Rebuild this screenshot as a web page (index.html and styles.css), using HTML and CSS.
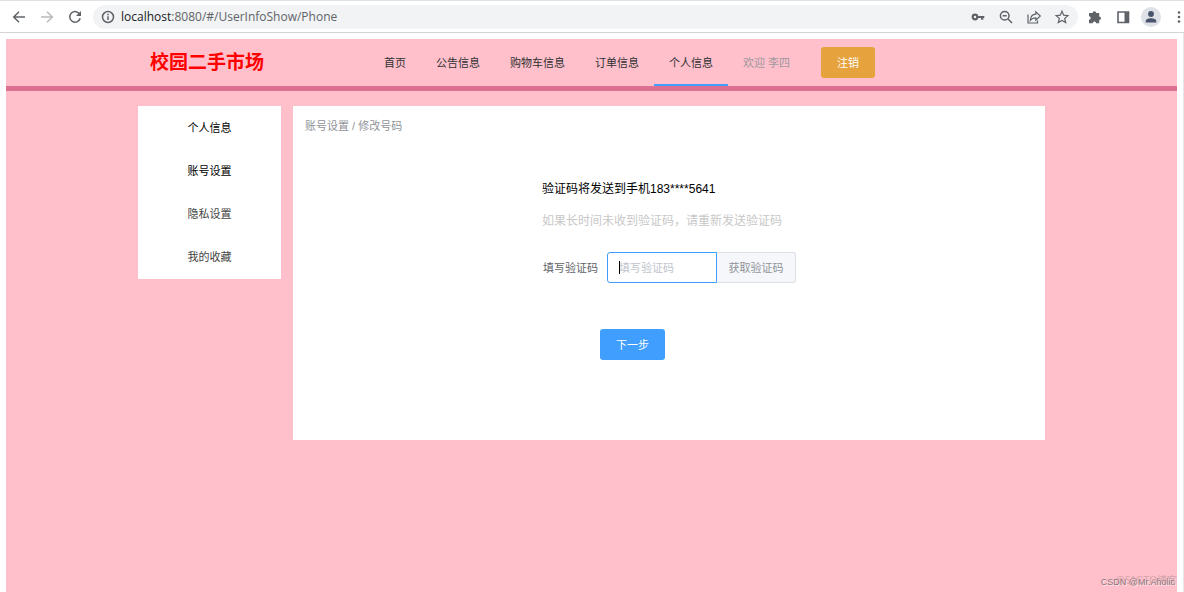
FILE: index.html
```
<!DOCTYPE html>
<html lang="zh-CN">
<head>
<meta charset="utf-8">
<title>校园二手市场</title>
<meta name="viewport" content="width=device-width, initial-scale=1">
<link rel="stylesheet" href="styles.css">
</head>
<body>
<div class="browser">
  <button class="tool" aria-label="后退"><svg viewBox="0 0 16 16" class="icon"><path d="M14 8H3M8 2.700 2.700 8 8 13.300"/></svg></button>
  <button class="tool tool-off" aria-label="前进"><svg viewBox="0 0 16 16" class="icon"><path d="M2 8h11M8 2.700 13.300 8 8 13.300"/></svg></button>
  <button class="tool" aria-label="刷新"><svg viewBox="0 0 16 16" class="icon"><path d="M12.800 5.500A5.300 5.300 0 1 0 13.200 9.300"/><path class="solid" d="M14 2v5H9z"/></svg></button>
  <div class="address">
    <svg viewBox="0 0 16 16" class="icon info"><circle cx="8" cy="8" r="5.500"/><path d="M8 7.300v3.800M8 4.800v1.400"/></svg>
    <span class="url"><b>localhost</b>:8080/#/UserInfoShow/Phone</span>
    <span class="address-tools">
      <button class="tool" aria-label="密码"><svg viewBox="0 0 16 16" class="icon"><circle cx="5" cy="8" r="2.300" stroke-width="2.200"/><path stroke-width="2.200" d="M8 8h6.300M12.200 8v2.800"/></svg></button>
      <button class="tool" aria-label="缩放"><svg viewBox="0 0 16 16" class="icon"><circle cx="6.700" cy="6.700" r="4.300"/><path d="m10 10 4 4M4.700 6.700h4"/></svg></button>
      <button class="tool" aria-label="分享"><svg viewBox="0 0 16 16" class="icon thin"><path d="M2 5.500V14h9.500v-2.500"/><path d="M4.300 11.300C4.600 7.500 6.500 5.300 9.800 5.100V2.800L14.300 7l-4.500 4.200V8.800C7.500 8.700 5.800 9.300 4.300 11.300z"/></svg></button>
      <button class="tool" aria-label="收藏"><svg viewBox="0 0 16 16" class="icon thin"><path d="m8 2.300 1.700 3.900 4.200.4-3.200 2.800 1 4.200L8 11.400l-3.700 2.200 1-4.200L2.100 6.600l4.200-.4z"/></svg></button>
    </span>
  </div>
  <div class="browser-tools">
    <button class="tool" aria-label="扩展程序"><svg viewBox="0 0 16 16" class="icon"><path class="solid" d="M2 4h3.600a1.800 1.800 0 1 1 3.600 0h3v3.400a1.800 1.800 0 1 1 0 3.600v3.200H9.100a1.700 1.700 0 1 0-3.400 0H2v-3.500a1.700 1.700 0 1 0 0-3.400z"/></svg></button>
    <button class="tool" aria-label="侧边栏"><svg viewBox="0 0 16 16" class="icon"><path stroke-width="1.600" d="M3 3h10.500v10.500H3z"/><path class="solid" d="M9.500 3h4v10.500h-4z"/></svg></button>
    <button class="tool avatar" aria-label="用户"><svg viewBox="0 0 16 16" class="icon"><circle class="solid" cx="8" cy="5" r="2.900"/><path class="solid" d="M2.700 13.500v-1.300C2.700 10 6 9.300 8 9.300s5.300.7 5.300 2.900v1.300z"/></svg></button>
    <button class="tool" aria-label="更多"><svg viewBox="0 0 16 16" class="icon"><circle class="dot" cx="8" cy="3.500" r="1.300"/><circle class="dot" cx="8" cy="8" r="1.300"/><circle class="dot" cx="8" cy="12.500" r="1.300"/></svg></button>
  </div>
</div>
<div class="viewport">
  <div class="page">
    <header class="header">
      <h1 class="brand">校园二手市场</h1>
      <nav class="nav">
        <a href="#home">首页</a>
        <a href="#notice">公告信息</a>
        <a href="#cart">购物车信息</a>
        <a href="#orders">订单信息</a>
        <a href="#user" class="current">个人信息</a>
        <span class="welcome">欢迎 李四</span>
      </nav>
      <button class="logout">注销</button>
    </header>
    <div class="content">
      <aside class="side">
        <a href="#info">个人信息</a>
        <a href="#account">账号设置</a>
        <a href="#privacy" class="muted">隐私设置</a>
        <a href="#favorites" class="muted">我的收藏</a>
      </aside>
      <main class="panel">
        <div class="crumbs">账号设置 / 修改号码</div>
        <form class="verify">
          <p class="sent">验证码将发送到手机183****5641</p>
          <p class="hint">如果长时间未收到验证码，请重新发送验证码</p>
          <div class="field">
            <label for="code">填写验证码</label>
            <span class="input-box"><span class="caret"></span><input id="code" type="text" placeholder="填写验证码"></span>
            <button type="button" class="get-code">获取验证码</button>
          </div>
          <button type="button" class="next">下一步</button>
        </form>
      </main>
    </div>
    <div class="mark mark-back">@51CTO博客</div>
    <div class="mark mark-front">CSDN @Mr.Aholic</div>
  </div>
</div>
</body>
</html>
```
FILE: styles.css
```
* { box-sizing: border-box; }

body {
  margin: 0;
  min-height: 100vh;
  display: flex;
  flex-direction: column;
  background: #fff;
  color: #303133;
  font: 11px/16px "Liberation Sans", "Noto Sans CJK SC", sans-serif;
}

a { color: inherit; text-decoration: none; }
button, input { font: inherit; }
button { border: 0; padding: 0; cursor: pointer; }
p, h1 { margin: 0; }

.browser {
  display: flex;
  align-items: center;
  height: 33px;
  padding-left: 11px;
  gap: 12px;
  border-top: 1px solid #dee1e6;
  border-bottom: 1px solid #d5d5d5;
  overflow: hidden;
}

.tool {
  display: flex;
  flex: none;
  align-items: center;
  justify-content: center;
  width: 16px;
  height: 16px;
  background: none;
  color: #5f6368;
}

.tool-off { color: #b8babd; }

.icon {
  width: 16px;
  height: 16px;
  fill: none;
  stroke: currentColor;
  stroke-width: 1.5;
}

.thin { stroke-width: 1.2; }
.solid { fill: currentColor; stroke: none; }
.dot { fill: currentColor; stroke: none; }

.address {
  flex: 1;
  display: flex;
  align-items: center;
  height: 24px;
  margin-left: -2px;
  padding: 0 8px 0 7px;
  border-radius: 12px;
  background: #f1f3f4;
}

.info { color: #5f6368; flex: none; }

.url {
  margin-left: 5px;
  color: #5f6368;
  font: 12px/16px "Open Sans", sans-serif;
}

.url b { color: #202124; font-weight: 400; }

.address-tools { display: flex; gap: 12px; margin-left: auto; }

.browser-tools {
  display: flex;
  align-items: center;
  gap: 12px;
  margin-right: -3px;
  margin-left: -3px;
}

.avatar {
  width: 20px;
  height: 20px;
  margin: 0 -2px;
  border-radius: 50%;
  background: #dee1e6;
  color: #48546c;
}

.avatar .icon { width: 16px; height: 16px; }

.viewport {
  flex: 1;
  display: flex;
  padding: 6px 6px 0;
  border-right: 1px solid #e8e8e8;
}

.page {
  position: relative;
  flex: 1;
  background: #ffc0cb;
}

.header {
  display: flex;
  align-items: center;
  height: 52px;
  padding: 0 144px;
  border-bottom: 5px solid #db7093;
}

.brand {
  width: 219px;
  color: #f00;
  font-size: 19px;
  line-height: 28px;
}

.nav { display: flex; align-self: stretch; }

.nav a, .welcome {
  display: flex;
  align-items: center;
  padding: 2px 15px 0;
  border-bottom: 2px solid transparent;
}

.nav .current { border-color: #409eff; }
.nav .welcome { color: #a0989f; }

.logout {
  width: 54px;
  height: 31px;
  margin-left: 16px;
  border-radius: 3px;
  background: #e6a23c;
  color: #fff;
}

.content {
  display: flex;
  align-items: flex-start;
  gap: 12px;
  padding: 15px 132px;
}

.side {
  flex: 0 0 143px;
  display: flex;
  flex-direction: column;
  padding-top: 1px;
  background: #fff;
}

.side a {
  color: #000;
  line-height: 43px;
  text-align: center;
}

.side .muted { color: #444; }

.panel {
  flex: 1;
  padding: 12px 12px 80px;
  background: #fff;
}

.crumbs { color: #909399; }

.verify {
  display: flex;
  flex-direction: column;
  width: 254px;
  margin: 45px auto 0;
}

.sent, .hint { font-size: 12px; line-height: 20px; }
.sent { color: #000; }
.hint { margin-top: 12px; color: #c8c8c8; }

.field {
  display: flex;
  align-items: center;
  margin-top: 21px;
  color: #606266;
}

.field label { flex: 0 0 65px; padding-left: 1px; }

.input-box {
  position: relative;
  flex: 1;
}

.input-box input {
  display: block;
  width: 100%;
  height: 31px;
  padding: 0 11px;
  border: 1px solid #409eff;
  border-radius: 3px 0 0 3px;
  outline: 0;
  background: #fff;
}

.input-box input::placeholder { color: #c0c4cc; }

.caret {
  position: absolute;
  top: 9px;
  left: 12px;
  width: 1px;
  height: 13px;
  background: #000;
}

.get-code {
  width: 79px;
  height: 31px;
  border: 1px solid #dcdfe6;
  border-left: 0;
  border-radius: 0 3px 3px 0;
  background: #f5f7fa;
  color: #909399;
}

.next {
  width: 65px;
  height: 31px;
  margin: 46px 0 0 58px;
  border-radius: 3px;
  background: #409eff;
  color: #fff;
}

.mark {
  position: absolute;
  right: 0;
  bottom: 4px;
  font-size: 9px;
  line-height: 12px;
  white-space: nowrap;
}

.mark-back { bottom: 5px; font-size: 10px; color: #d3a5ad; }
.mark-front { right: 2px; color: #8e7479; text-shadow: 1px 1px 0 #ffe3e8; }
```
